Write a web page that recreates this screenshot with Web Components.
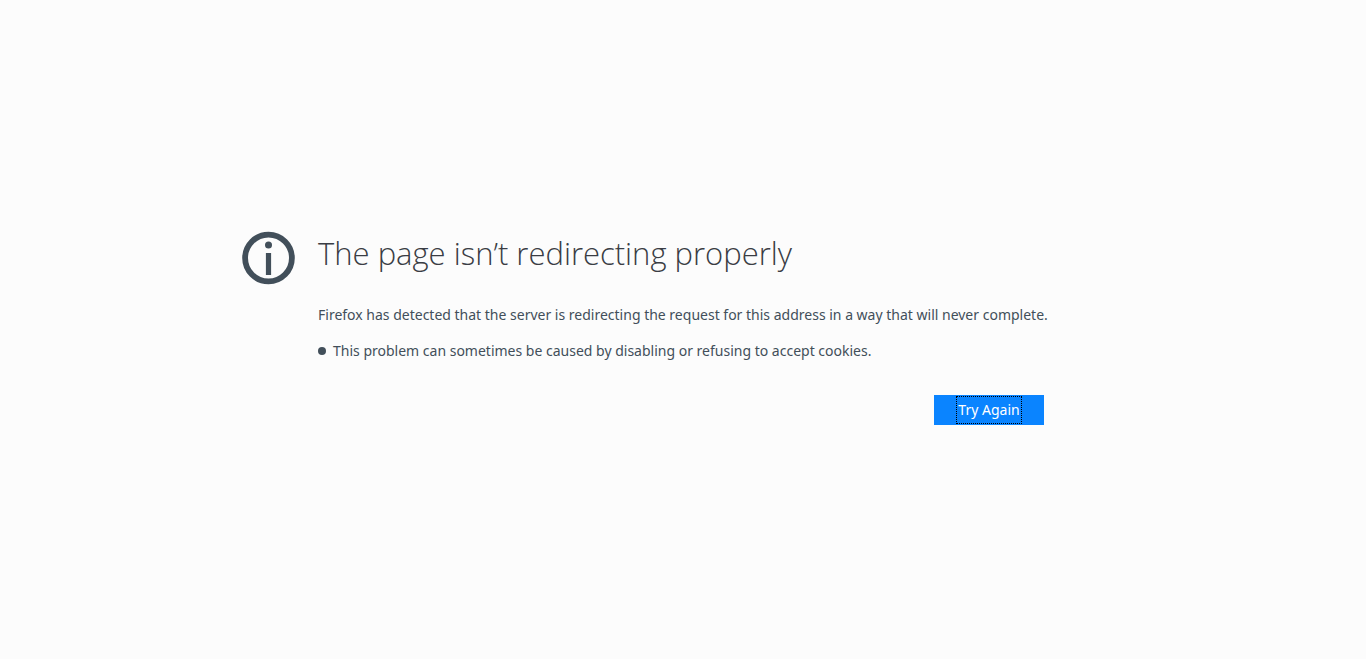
<!DOCTYPE html>
<html lang="en">
<head>
<meta charset="utf-8">
<meta name="viewport" content="width=device-width, initial-scale=1">
<title>Problem loading page</title>
<style>
    body {
        margin: 0;
        background: #fcfcfc;
        color: #424f5a;
        font: 14px/24px "Noto Sans", "Open Sans", sans-serif;
    }
</style>
</head>
<body>
<error-page>
    <span slot="title">The page isn’t redirecting properly</span>
    <span slot="description">Firefox has detected that the server is redirecting the request for this address in a way that will never complete.</span>
    <error-hints slot="hints">
        <span>This problem can sometimes be caused by disabling or refusing to accept cookies.</span>
    </error-hints>
    <retry-button slot="actions">Try Again</retry-button>
</error-page>

<script>
  // Round info icon beside the title
  class InfoIcon extends HTMLElement {
    constructor() {
        super();
        this.attachShadow({ mode: 'open' });
        this.shadowRoot.innerHTML = `
            <style>
                :host {
                    display: block;
                    width: 54px;
                    height: 54px;
                }

                svg {
                    display: block;
                    width: 100%;
                    height: 100%;
                }
            </style>
            <svg viewBox="0 0 54 54" aria-hidden="true">
                <circle cx="26.5" cy="27" r="23.4" fill="none" stroke="#424f5a" stroke-width="5.8"/>
                <circle cx="26.5" cy="14" r="3.5" fill="#424f5a"/>
                <rect x="23.9" y="22" width="5.2" height="22" fill="#424f5a"/>
            </svg>
        `;
    }
  }

  // Bulleted hint under the description
  class ErrorHints extends HTMLElement {
    constructor() {
        super();
        this.attachShadow({ mode: 'open' });
        this.shadowRoot.innerHTML = `
            <style>
                :host {
                    display: block;
                }

                ul {
                    margin: 0;
                    padding: 0;
                    list-style: none;
                }

                li {
                    display: flex;
                    gap: 7px;
                }

                li::before {
                    content: "";
                    flex: none;
                    width: 8px;
                    height: 8px;
                    margin-top: 8px;
                    border-radius: 50%;
                    background: #424f5a;
                }
            </style>
            <ul>
                <li><slot></slot></li>
            </ul>
        `;
    }
  }

  class RetryButton extends HTMLElement {
    constructor() {
        super();
        this.attachShadow({ mode: 'open' });
        this.shadowRoot.innerHTML = `
            <style>
                :host {
                    display: block;
                }

                button {
                    display: flex;
                    justify-content: center;
                    min-width: 110px;
                    margin: 0;
                    padding: 1px;
                    border: 0;
                    background: #0a84ff;
                    color: #fff;
                    font: inherit;
                    outline: none;
                }

                span {
                    padding: 1px;
                    border: 1px dotted #000;
                    line-height: 24px;
                }
            </style>
            <button type="button"><span><slot></slot></span></button>
        `;
        this.shadowRoot.querySelector('button').addEventListener('click', () => location.reload());
    }
  }

  class ErrorPage extends HTMLElement {
    constructor() {
        super();
        this.attachShadow({ mode: 'open' });
        this.shadowRoot.innerHTML = `
            <style>
                :host {
                    display: flex;
                    justify-content: center;
                    align-items: center;
                    box-sizing: border-box;
                    min-height: 100vh;
                    padding: 0 48px;
                }

                main {
                    display: grid;
                    grid-template-columns: 54px 1fr;
                    column-gap: 22px;
                    box-sizing: border-box;
                    width: 100%;
                    max-width: 882px;
                    padding-right: 72px;
                }

                h1 {
                    margin: 0;
                    color: #3a3d44;
                    font-family: "Open Sans", "Noto Sans", sans-serif;
                    font-size: 31px;
                    font-weight: 300;
                    line-height: 44px;
                }

                p {
                    margin: 28px 0 12px;
                }

                .actions {
                    display: flex;
                    justify-content: flex-end;
                    margin-top: 32px;
                    padding: 0 8px 4px;
                }
            </style>
            <main>
                <info-icon></info-icon>
                <div>
                    <h1><slot name="title"></slot></h1>
                    <p><slot name="description"></slot></p>
                    <slot name="hints"></slot>
                    <div class="actions"><slot name="actions"></slot></div>
                </div>
            </main>
        `;
    }
  }

  customElements.define('info-icon', InfoIcon);
  customElements.define('error-hints', ErrorHints);
  customElements.define('retry-button', RetryButton);
  customElements.define('error-page', ErrorPage);
</script>
</body>
</html>
